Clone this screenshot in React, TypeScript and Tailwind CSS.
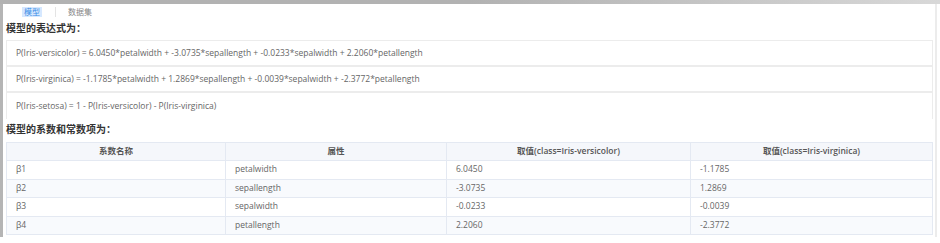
const expressions = [
  'P(Iris-versicolor) = 6.0450*petalwidth + -3.0735*sepallength + -0.0233*sepalwidth + 2.2060*petallength',
  'P(Iris-virginica) = -1.1785*petalwidth + 1.2869*sepallength + -0.0039*sepalwidth + -2.3772*petallength',
  'P(Iris-setosa) = 1 - P(Iris-versicolor) - P(Iris-virginica)',
];

const rows = [
  { name: 'β1', attr: 'petalwidth', a: '6.0450', b: '-1.1785' },
  { name: 'β2', attr: 'sepallength', a: '-3.0735', b: '1.2869' },
  { name: 'β3', attr: 'sepalwidth', a: '-0.0233', b: '-0.0039' },
  { name: 'β4', attr: 'petallength', a: '2.2060', b: '-2.3772' },
];

const font = { fontFamily: '"Open Sans", "Noto Sans CJK SC", sans-serif' };

export default function App() {
  return (
    <div className="w-[940px] h-[243px] bg-white overflow-hidden" style={font}>
      <div className="h-[4px] bg-gradient-to-r from-[#b2b2b2] via-[#b2b2b2] to-[#d8d8d8]" />
      <div className="flex h-[233px]">
        <div className="w-[3px] bg-[#b5b5b5]" />
        <div className="w-[932px] pl-[3px] pr-[2px]">
          {/* tabs */}
          <div className="flex items-center h-[15px] text-[8px] leading-none">
            <span className="ml-[16px] px-[2px] py-[1px] bg-[#d6e8ff] text-[#3a8ee6]">模型</span>
            <span className="ml-[13px] w-px h-[10px] bg-[#e4e4e4]" />
            <span className="ml-[12px] text-[#888]">数据集</span>
          </div>

          <div className="mt-[2px] text-[10px] font-bold text-[#333] leading-[14px]">模型的表达式为：</div>

          <div className="mt-[5px] border-x border-t border-[#ececec]">
            {expressions.map((e, i) => (
              <div
                key={i}
                className={`h-[26px] flex items-center pl-[9px] text-[8.5px] text-[#666] ${i < 2 ? 'border-b-2 border-[#ececec]' : ''}`}
              >
                {e}
              </div>
            ))}
          </div>

          <div className="mt-[3px] text-[10px] font-bold text-[#333] leading-[14px]">模型的系数和常数项为：</div>

          <table className="mt-[6px] w-full border-collapse text-[8.5px] text-[#666] table-fixed">
            <colgroup>
              <col className="w-[219px]" />
              <col className="w-[221px]" />
              <col className="w-[244px]" />
              <col />
            </colgroup>
            <thead>
              <tr className="h-[18px] bg-[#f5f7fb]">
                {['系数名称', '属性', '取值(class=Iris-versicolor)', '取值(class=Iris-virginica)'].map((h) => (
                  <th key={h} className="border border-[#e4e9f2] font-semibold text-[#555] text-center">
                    {h}
                  </th>
                ))}
              </tr>
            </thead>
            <tbody>
              {rows.map((r, i) => (
                <tr key={r.name} className={`h-[18.5px] ${i % 2 === 1 ? 'bg-[#f8fafd]' : 'bg-white'}`}>
                  <td className="border border-[#e4e9f2] pl-[9px]">{r.name}</td>
                  <td className="border border-[#e4e9f2] pl-[9px]">{r.attr}</td>
                  <td className="border border-[#e4e9f2] pl-[9px]">{r.a}</td>
                  <td className="border border-[#e4e9f2] pl-[9px]">{r.b}</td>
                </tr>
              ))}
            </tbody>
          </table>
        </div>
        <div className="w-[2px] bg-[#ececec] h-[233px]" />
      </div>
    </div>
  );
}
